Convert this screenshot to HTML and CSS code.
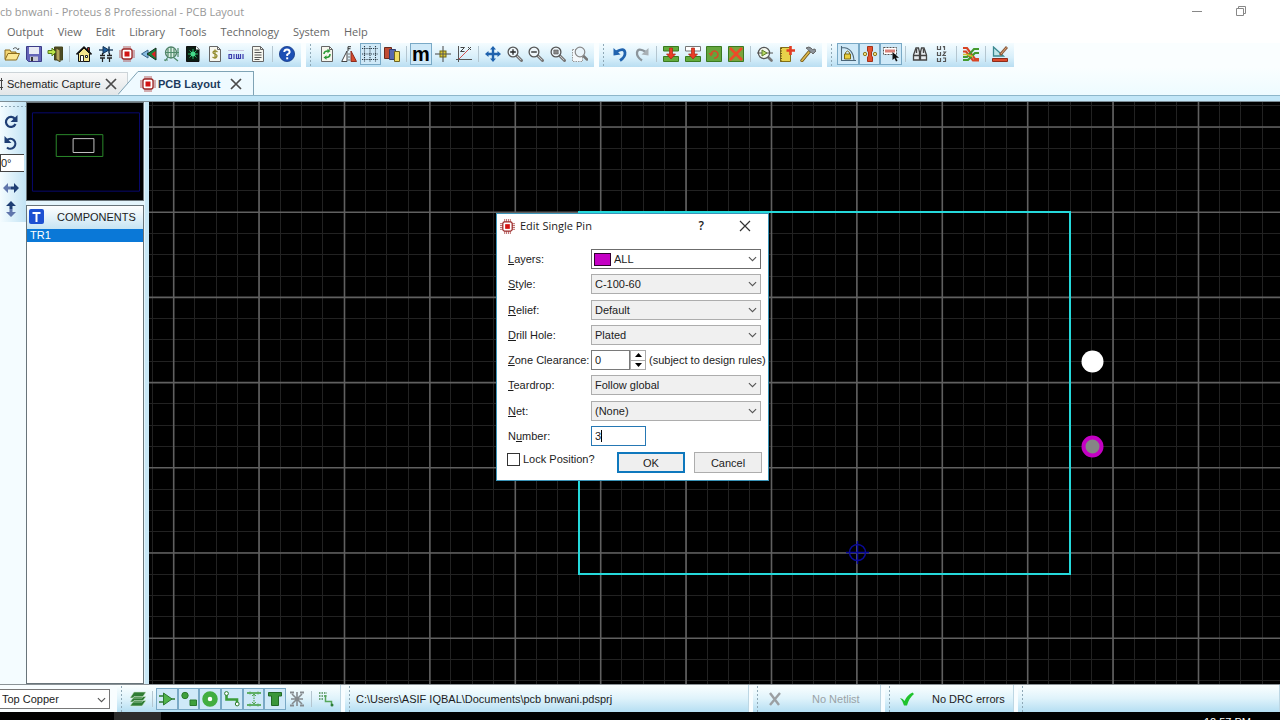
FILE: index.html
```html
<!DOCTYPE html>
<html lang="en">
<head>
<meta charset="utf-8">
<title>pcb bnwani - Proteus 8 Professional - PCB Layout</title>
<link rel="stylesheet" href="styles.css">
</head>
<body>
<svg class="defs" aria-hidden="true">
  <symbol id="chip" viewBox="0 0 16 16"><path d="M5 0v16M7 0v16M9 0v16M11 0v16M0 5h16M0 7h16M0 9h16M0 11h16" stroke="#b05050" stroke-width=".9"/><rect x="3" y="3" width="10" height="10" rx="2" fill="#fff" stroke="#9a2828" stroke-width="1.300"/><rect x="5.500" y="5.500" width="5" height="5" fill="#d21414"/></symbol>
  <symbol id="chev" viewBox="0 0 10 6"><path d="M1 .8l4 4 4-4" fill="none" stroke="#555" stroke-width="1.200"/></symbol>
  <symbol id="close" viewBox="0 0 12 12"><path d="M1 1l10 10M11 1L1 11" fill="none" stroke="#4a4a4a" stroke-width="1.700"/></symbol>
  <symbol id="lens" viewBox="0 0 16 16"><path d="M9.500 9.500l5 5" stroke="#777" stroke-width="3" stroke-linecap="round"/><path d="M10 10l4 4" stroke="#c4c4c4"/><circle cx="6" cy="6" r="4.900" fill="#eef6fa" stroke="#555" stroke-width="1.300"/></symbol>
  <symbol id="sheet" viewBox="0 0 16 16"><path d="M2.500.5h8l3 3v12h-11z" fill="#f6f6ee" stroke="#666"/><path d="M10.500.5v3h3" fill="none" stroke="#666"/></symbol>
</svg>

<header class="titlebar">
  <h1 class="title">cb bnwani - Proteus 8 Professional - PCB Layout</h1>
  <div class="winbtns">
    <button aria-label="Minimize"><svg width="12" height="12"><path d="M1 6.500h10" stroke="#888"/></svg></button>
    <button aria-label="Restore"><svg width="12" height="12"><path d="M1.500 3.500h7v7h-7zM3.500 3.500v-2h7v7h-2" fill="none" stroke="#888"/></svg></button>
  </div>
</header>

<nav class="menu">
  <button>Output</button><button>View</button><button>Edit</button><button>Library</button><button>Tools</button><button>Technology</button><button>System</button><button>Help</button>
</nav>

<div class="toolbars">
  <div class="bar bar-first">
    <div class="grp g3">
      <button aria-label="Open"><svg viewBox="0 0 16 16"><path d="M1 13V4h5l1 2h5v2" fill="#f4d774" stroke="#8a6a1c"/><path d="M1 14l3-6.500h11.500L12.500 14z" fill="#fbe793" stroke="#8a6a1c"/><path d="M9 3q3-3 5 1l1-2" fill="none" stroke="#555"/></svg></button>
      <button aria-label="Save"><svg viewBox="0 0 16 16"><path d="M.5.5h15v15h-13l-2-2z" fill="#6464b8" stroke="#3c3c88"/><path d="M3 1h10v7H3z" fill="#e8eaf4"/><path d="M4 10.500h8V15H4z" fill="#c8c8d8"/><path d="M5 11h2v4H5z" fill="#333"/></svg></button>
      <button aria-label="Close project"><svg viewBox="0 0 16 16"><path d="M7.500 1h8v13h-8z" fill="#4c4c22" stroke="#44441c"/><path d="M9 2l4 2v12l-4-3z" fill="#b3a45a" stroke="#4c4420"/><path d="M1 4.500h4V2l4 4-4 4V7.500H1z" fill="#bde34a" stroke="#55801c"/></svg></button>
    </div>
    <i class="sep"></i>
    <div class="grp g9">
      <button aria-label="Home"><svg viewBox="0 0 16 16"><path d="M11.500 1.500h2v5h-2z" fill="#aa2222" stroke="#222"/><path d="M2.500 7.500v8h11v-8L8 2z" fill="#f4e48c" stroke="#111"/><path d="M.5 8.500L8 1.200l7.500 7.300" fill="none" stroke="#111" stroke-width="1.600"/><path d="M4.500 9.500h3v6h-3z" fill="#fff" stroke="#222"/><path d="M9.500 9.500h2v2h-2z" fill="#fff" stroke="#222"/></svg></button>
      <button aria-label="Schematic"><svg viewBox="0 0 16 16"><path d="M1 4h14" stroke="#163454" stroke-width="1.300"/><path d="M5 .5v7L11 4z" fill="#1c5c9c" stroke="#163454"/><path d="M11 .5v7" stroke="#163454" stroke-width="1.500"/><path d="M2 9.500h5M2 12h5M9 9.500h5M9 12h5" stroke="#222" stroke-width="1.500"/><path d="M4.500 7v2.500M4.500 12v4M11.500 7v2.500M11.500 12v4" stroke="#222" stroke-width="1.200"/></svg></button>
      <button aria-label="PCB"><svg><use href="#chip"/></svg></button>
      <button aria-label="3D view"><svg viewBox="0 0 16 16"><path d="M7 4L.5 8 7 12z" fill="#88bce0" stroke="#38668a"/><path d="M15 2L6 8l9 6z" fill="#15853c" stroke="#142c1c"/><path d="M10.500 8l4-3v7z" fill="#d22"/></svg></button>
      <button aria-label="Gerber viewer"><svg viewBox="0 0 16 16"><circle cx="8" cy="6.500" r="5.500" fill="#dceee4" stroke="#4f7f66" stroke-width="1.300"/><path d="M8 1v11M2 6.500h14M5 2.500v8M11 2.500v8M15 2v9M1 14h4M10 11l5 4M5 11l-3 4" fill="none" stroke="#4f8a6a" stroke-width="1.200"/></svg></button>
      <button aria-label="Design explorer"><svg viewBox="0 0 16 16"><path d="M1.500.5h9.500l3 3v12H1.500z" fill="#0b1d12" stroke="#111"/><path d="M11 .5v3h3z" fill="#fff"/><path d="M8 3v10M3 8h10M4.500 4.500l7 7M11.500 4.500l-7 7" stroke="#22b860"/><circle cx="8" cy="8" r="2.500" fill="#45db8a"/></svg></button>
      <button aria-label="Bill of materials"><svg viewBox="0 0 16 16"><use href="#sheet"/><path d="M10.500 6Q8 4 6.500 5.500T8 8t1.500 3-4 0M8 3.500v9" fill="none" stroke="#938c2c" stroke-width="1.300"/></svg></button>
      <button aria-label="Source code"><svg viewBox="0 0 16 16"><path d="M0 4.500h16" stroke="#c8c4dc"/><path d="M1 8.500h2.500v4H1zM6 8v5M8.500 8v4.500h2V8M10.500 12.500h2V8M15 8v5" fill="none" stroke="#3c3cae" stroke-width="1.200"/></svg></button>
      <button aria-label="Project notes"><svg viewBox="0 0 16 16"><use href="#sheet"/><path d="M4.500 4h5M4.500 6.500h7M4.500 9h7M4.500 11.500h7M4.500 13.500h5" stroke="#555"/></svg></button>
    </div>
    <i class="sep"></i>
    <div class="grp g1"><button aria-label="Help"><svg viewBox="0 0 16 16"><circle cx="8" cy="8" r="7.600" fill="#1c4fb4" stroke="#153a86" stroke-width=".8"/><path d="M5.200 6Q5.500 3.500 8 3.500T10.700 6Q10.500 7.500 8.200 8.500V10" fill="none" stroke="#fff" stroke-width="1.900"/><path d="M7.200 11.300h2v2h-2z" fill="#fff"/></svg></button></div>
  </div>

  <div class="bar">
    <i class="handle"></i>
    <div class="grp g4">
      <button aria-label="Redraw"><svg viewBox="0 0 16 16"><use href="#sheet"/><path d="M5 8q0-3 4-3M11 8q0 3.500-4 3.500" fill="none" stroke="#2c9a36" stroke-width="1.600"/><path d="M8.500 2.800l3 2.200-3 2.200zM7.500 9.300l-3 2.200 3 2.200z" fill="#2c9a36"/></svg></button>
      <button aria-label="Flip view"><svg viewBox="0 0 16 16"><path d="M6 5v10.500H.7z" fill="#fff" stroke="#444"/><path d="M10 5v10.500h5.500z" fill="#d84a2c" stroke="#8c2c1c"/><path d="M8 7v9" stroke="#777" stroke-dasharray="2 1"/><path d="M7 5V.7h3M7 2.700h2.500" fill="none" stroke="#333"/></svg></button>
      <button class="on" aria-label="Grid"><svg viewBox="0 0 16 16"><path d="M0 2.500h16M0 8h16M0 13.500h16M2.500 0v16M8 0v16M13.500 0v16" stroke="#2c3c48" stroke-width="1.100" stroke-dasharray="1.200 1"/></svg></button>
      <button aria-label="Layers"><svg viewBox="0 0 16 16"><path d="M.5 1.500h7v11h-7z" fill="#c04c34" stroke="#6b2a1c"/><path d="M5.500 3.500h6v10h-6z" fill="#5868b0" stroke="#333f70"/><path d="M10.500 5.500h5v10h-5z" fill="#f0dc62" stroke="#6e6320"/></svg></button>
    </div>
    <i class="sep"></i>
    <div class="grp g3">
      <button class="on metric" aria-label="Metric">m</button>
      <button aria-label="Origin"><svg viewBox="0 0 16 16"><path d="M8 0v16M0 8h16" stroke="#444"/><rect x="5" y="5" width="6" height="6" fill="#dcc932" stroke="#6f6614"/><path d="M8 5v6M5 8h6" stroke="#555"/></svg></button>
      <button aria-label="Polar coordinates"><svg viewBox="0 0 16 16"><path d="M2.500 0v16M0 13.500h16" stroke="#555"/><path d="M3 13L14 2" stroke="#d25050"/><path d="M4.500 1.500h4l-4 4h4M12 1l3 3M15 1l-3 3" fill="none" stroke="#444"/></svg></button>
    </div>
    <i class="sep"></i>
    <div class="grp g5">
      <button aria-label="Pan"><svg viewBox="0 0 16 16"><path d="M8 0l3 3.500H9.200v3.300h3.300V5L16 8l-3.500 3V9.200H9.200v3.300H11L8 16l-3-3.500h1.800V9.200H3.500V11L0 8l3.500-3v1.800h3.300V3.500H5z" fill="#1f62ae"/></svg></button>
      <button aria-label="Zoom in"><svg viewBox="0 0 16 16"><use href="#lens"/><path d="M6 3.200v5.600M3.200 6h5.600" stroke="#222" stroke-width="1.300"/></svg></button>
      <button aria-label="Zoom out"><svg viewBox="0 0 16 16"><use href="#lens"/><path d="M3.200 6h5.600" stroke="#222" stroke-width="1.300"/></svg></button>
      <button aria-label="Zoom all"><svg viewBox="0 0 16 16"><use href="#lens"/><path d="M3.800 4h4.400v4H3.800z" fill="#888" stroke="#555" stroke-width=".6"/></svg></button>
      <button aria-label="Zoom area"><svg viewBox="0 0 16 16"><path d="M.5 3.500h10v12H.5z" fill="#f4f8fb" stroke="#999" stroke-dasharray="1.500 1"/><path d="M11.500 10l3.500 3.500" stroke="#777" stroke-width="2.500" stroke-linecap="round"/><circle cx="8" cy="6" r="4.800" fill="#eaf4fa" stroke="#888" stroke-width="1.200"/></svg></button>
    </div>
  </div>

  <div class="bar">
    <i class="handle"></i>
    <div class="grp g2">
      <button aria-label="Undo"><svg viewBox="0 0 16 16"><path d="M4 6Q12 1 13 6.500 13.500 11 8 14.500" fill="none" stroke="#2163ae" stroke-width="2.800"/><path d="M1.500 2v7.500l7-1z" fill="#2163ae"/></svg></button>
      <button aria-label="Redo"><svg viewBox="0 0 16 16"><path d="M12 6Q4 1 3 6.500 2.500 11 8 14.500" fill="none" stroke="#8c959b" stroke-width="2.300"/><path d="M14.500 2v7.500l-7-1z" fill="#a8b0b5"/></svg></button>
    </div>
    <i class="sep"></i>
    <div class="grp g4">
      <button aria-label="Block copy"><svg viewBox="0 0 16 16"><path d="M.5.500h15v4.500H.5zM.5 10.500h15v5H.5z" fill="#63ac3c" stroke="#3a7a20"/><path d="M6.500 2h3v6h3L8 13 3.500 8h3z" fill="#ea3c26" stroke="#a82516" stroke-width=".7"/></svg></button>
      <button aria-label="Block move"><svg viewBox="0 0 16 16"><path d="M.5.500h15v4.500H.5z" fill="#fff" stroke="#777"/><path d="M.5 10.500h15v5H.5z" fill="#63ac3c" stroke="#3a7a20"/><path d="M6.500 2h3v6h3L8 13 3.500 8h3z" fill="#ea3c26" stroke="#a82516" stroke-width=".7"/></svg></button>
      <button aria-label="Block rotate"><svg viewBox="0 0 16 16"><path d="M.5.500h15v15H.5z" fill="#63a53c" stroke="#3a7a20"/><path d="M5 8.500a3.500 3.500 0 1 1 3 3.500" fill="none" stroke="#d2502a" stroke-width="1.600"/><path d="M2.500 7h5L5 10.500z" fill="#d2502a"/></svg></button>
      <button aria-label="Block delete"><svg viewBox="0 0 16 16"><path d="M.5.500h15v15H.5z" fill="#7aa33c" stroke="#3a7a20"/><path d="M2 2l12 12M14 2L2 14" stroke="#ee4a28" stroke-width="2.600"/></svg></button>
    </div>
    <i class="sep"></i>
    <div class="grp g3">
      <button aria-label="Pick parts"><svg viewBox="0 0 16 16"><path d="M11 11l3.500 3.500" stroke="#777" stroke-width="2.600" stroke-linecap="round"/><circle cx="7" cy="7" r="5.600" fill="#f4f8ee" stroke="#555" stroke-width="1.200"/><path d="M0 7h5M9.500 7H16" stroke="#555"/><path d="M5 4v6l5-3z" fill="#b9da62" stroke="#5c7a2c"/></svg></button>
      <button aria-label="Make package"><svg viewBox="0 0 16 16"><path d="M1.500 1.500h10v14h-10z" fill="#e8d24a" stroke="#826f16"/><path d="M2 2v14" stroke="#6d5c1c" stroke-dasharray="1 1.500" stroke-width="2"/><path d="M11.500 0v9M7.500 4.500H16" stroke="#e23c22" stroke-width="2.600"/></svg></button>
      <button aria-label="Decompose"><svg viewBox="0 0 16 16"><path d="M9 6L2 14.500" stroke="#6e5418" stroke-width="3.400" stroke-linecap="round"/><path d="M9 6L2 14.500" stroke="#dcb84c" stroke-width="1.800" stroke-linecap="round"/><path d="M6 2q3-2 5 0l1.500 1.500L15 3l1 2-3 3-1.500-1.500L10 6 8.500 4z" fill="#8c9298" stroke="#555" stroke-width=".8"/></svg></button>
    </div>
  </div>

  <div class="bar">
    <i class="handle"></i>
    <div class="grp g3">
      <button class="on" aria-label="Trace angle lock"><svg viewBox="0 0 16 16"><path d="M1.500 0v14.500H16M2 1.500q11 0 12 13" fill="none" stroke="#4c6678" stroke-width="1.100"/><path d="M4.500 8h6v5h-6z" fill="#e8ce3c" stroke="#7d6a14"/><path d="M5.500 8V6.500q2-3 4 0V8" fill="none" stroke="#7d6a14"/></svg></button>
      <button class="on" aria-label="Auto track necking"><svg viewBox="0 0 16 16"><path d="M5.500.5h5V5l-1 1v4l1 1v4.500h-5V11l1-1V6l-1-1z" fill="#e2502e" stroke="#a53218"/><circle cx="3" cy="8" r="1.700" fill="#f0dc7c" stroke="#8c7822"/><circle cx="13" cy="8" r="1.700" fill="#f0dc7c" stroke="#8c7822"/></svg></button>
      <button class="on" aria-label="Selection filter"><svg viewBox="0 0 16 16"><path d="M.5 1.500h13v7H.5z" fill="#fff" stroke="#555" stroke-dasharray="2 1"/><path d="M2 3.500h10v3H2z" fill="#d98078"/><path d="M9.500 6v8l2-1.700 1.500 3.200 1.500-.7-1.500-3H16z" fill="#111"/></svg></button>
    </div>
    <i class="sep"></i>
    <div class="grp g2">
      <button aria-label="Search"><svg viewBox="0 0 16 16"><path d="M4 2h2.500l1 4v8h-6V9zM9.500 2H12l2.500 7v5h-6V6z" fill="#e5eaee" stroke="#444" stroke-width="1.300"/><path d="M2 9.500h5M9 9.500h5M7 6.500h2M4.500 3v4M11.500 3v4" stroke="#444" stroke-width="1.400"/></svg></button>
      <button aria-label="Auto name"><svg viewBox="0 0 16 16"><path d="M3.500 0v3.500h3V0M3.500 6v3.500h3V6M3.500 12v3.500h3V12M9 1l1.500-1v4M9 6h2.500l-2.500 3.500h3M9 12h2.500v3.500H9" fill="none" stroke="#555" stroke-width="1.200"/></svg></button>
    </div>
    <i class="sep"></i>
    <div class="grp g1"><button aria-label="Auto-router"><svg viewBox="0 0 16 16"><path d="M0 2h4l8 11h4M0 5.500h3l7 9h6" fill="none" stroke="#d84424" stroke-width="2.200"/><path d="M0 11h4l7-8h5M0 14h5l7-7h4" fill="none" stroke="#439a2e" stroke-width="2.200"/><path d="M0 8.500h4l6 2" fill="none" stroke="#d6bd2c" stroke-width="1.500"/></svg></button></div>
    <i class="sep"></i>
    <div class="grp g1"><button aria-label="Design rules"><svg viewBox="0 0 16 16"><path d="M1.500 1v9h10z" fill="#bfe6e8" stroke="#3c8890" stroke-width="1.300"/><path d="M.5 12.500h15v3H.5z" fill="#dc4a2c" stroke="#8c2c1a"/><path d="M15 1L8 9" stroke="#8c5a3c" stroke-width="2.800"/><path d="M14.500 1.500L9 8" stroke="#dda878" stroke-width="1"/></svg></button></div>
  </div>
</div>

<div class="tabs">
  <div class="tab tab-idle"><svg class="stub" width="4" height="14"><path d="M0 3.500h3M0 10.500h3M1.500 1v12" stroke="#444"/></svg><span>Schematic Capture</span><button aria-label="Close Schematic Capture"><svg width="12" height="12"><use href="#close"/></svg></button></div>
  <div class="tab tab-active">
    <svg class="slant" width="22" height="24" viewBox="0 0 22 24"><path d="M0 24L20 .5h2V24z" fill="#effaff"/><path d="M0 23.500L20 .5h2" fill="none" stroke="#7fa3b5"/></svg>
    <div class="tabface"><svg width="16" height="16"><use href="#chip"/></svg><span>PCB Layout</span><button aria-label="Close PCB Layout"><svg width="12" height="12"><use href="#close"/></svg></button></div>
  </div>
</div>
<div class="band"></div>

<main class="work">
  <aside class="rotate">
    <div class="rotbar">
      <button aria-label="Rotate clockwise"><svg width="16" height="16"><path d="M12.500 10A5 5 0 1 1 12 5" fill="none" stroke="#1f3e74" stroke-width="2.200"/><path d="M14.500 1v7h-7z" fill="#1f3e74"/></svg></button>
      <button aria-label="Rotate anti-clockwise"><svg width="16" height="16"><path d="M4 12.500A5 5 0 1 0 4 5" fill="none" stroke="#1f3e74" stroke-width="2.200"/><path d="M1.500 1v7h7z" fill="#1f3e74"/></svg></button>
      <input class="angle" aria-label="Angle" value="0°">
      <button aria-label="Mirror horizontally"><svg width="16" height="16"><path d="M0 8l5-5v3.500h3v3H5V13z" fill="#6076ac"/><path d="M16 8l-5-5v3.500H8v3h3V13z" fill="#1f3e74"/></svg></button>
      <button aria-label="Mirror vertically"><svg width="16" height="16"><path d="M8 0l5 5H9.500v3h-3V5H3z" fill="#1f3e74"/><path d="M8 16l5-5H9.500V8h-3v3H3z" fill="#6076ac"/></svg></button>
    </div>
  </aside>
  <section class="side">
    <svg class="overview" viewBox="0 0 117 97"><path d="M5.500 9.500h108v79H5.500z" fill="none" stroke="#08086e"/><path d="M29.500 31.500h47v22h-47z" fill="none" stroke="#2b8a2b"/><path d="M46.500 35.500h21v14h-21z" fill="none" stroke="#c4c4c4"/></svg>
    <div class="panel">
      <h2><svg width="15" height="15"><rect width="15" height="15" rx="2" fill="#1c50d2"/><path d="M3.500 4h8M7.500 4v9" stroke="#fff" stroke-width="2"/></svg><span>COMPONENTS</span></h2>
      <ul><li>TR1</li></ul>
    </div>
  </section>
  <section class="canvas">
    <svg class="board" aria-label="Board">
      <g shape-rendering="crispEdges">
        <path d="M-61.500 0H3000" stroke="#222" stroke-width="4000" stroke-dasharray="1 20.350"/>
        <path d="M0-60.700V3000" stroke="#222" stroke-width="6000" stroke-dasharray="1 20.300"/>
      </g>
      <path d="M-61.500 0H3000" stroke="#606060" stroke-width="4000" stroke-dasharray="1.600 83.800"/>
      <path d="M0-61V3000" stroke="#606060" stroke-width="6000" stroke-dasharray="1.600 83.600"/>
      <rect x="430" y="110" width="491" height="362" fill="none" stroke="#25d9db" stroke-width="2"/>
      <circle cx="943.500" cy="259.500" r="11" fill="#fff"/>
      <circle cx="943.500" cy="344.500" r="9" fill="#858585" stroke="#c400c4" stroke-width="4"/>
      <g fill="none" stroke="#0a0a9a" stroke-width="1.500"><circle cx="708.500" cy="450.500" r="8"/><path d="M697 450.500h23M708.500 439v23"/></g>
    </svg>
    <form class="dialog">
      <div class="dhead"><svg width="15" height="15"><use href="#chip"/></svg><span class="dtitle">Edit Single Pin</span><button type="button" class="q" aria-label="Help">?</button><button type="button" aria-label="Close"><svg width="12" height="12"><path d="M1 1l10 10M11 1L1 11" stroke="#333" stroke-width="1.200"/></svg></button></div>
      <div class="fields">
        <div class="row"><label for="layers"><u>L</u>ayers:</label><span class="combo swatched"><select id="layers"><option>ALL</option></select><i class="swatch"></i><svg><use href="#chev"/></svg></span></div>
        <div class="row"><label for="style"><u>S</u>tyle:</label><span class="combo"><select id="style"><option>C-100-60</option></select><svg><use href="#chev"/></svg></span></div>
        <div class="row"><label for="relief"><u>R</u>elief:</label><span class="combo"><select id="relief"><option>Default</option></select><svg><use href="#chev"/></svg></span></div>
        <div class="row"><label for="drill"><u>D</u>rill Hole:</label><span class="combo"><select id="drill"><option>Plated</option></select><svg><use href="#chev"/></svg></span></div>
        <div class="row"><label for="zone"><u>Z</u>one Clearance:</label><input id="zone" class="num" value="0"><span class="spin"><button type="button" aria-label="Increase"><svg width="7" height="4"><path d="M0 4l3.500-4L7 4z"/></svg></button><button type="button" aria-label="Decrease"><svg width="7" height="4"><path d="M0 0l3.500 4L7 0z"/></svg></button></span><span class="hint">(subject to design rules)</span></div>
        <div class="row"><label for="tear"><u>T</u>eardrop:</label><span class="combo"><select id="tear"><option>Follow global</option></select><svg><use href="#chev"/></svg></span></div>
        <div class="row"><label for="net"><u>N</u>et:</label><span class="combo"><select id="net"><option>(None)</option></select><svg><use href="#chev"/></svg></span></div>
        <div class="row"><label for="number">N<u>u</u>mber:</label><span class="numwrap"><input id="number" value="3"><i class="caret"></i></span></div>
      </div>
      <div class="dfoot"><label class="lock"><input type="checkbox"><span>Lock Position?</span></label><button type="button" class="btn ok">OK</button><button type="button" class="btn">Cancel</button></div>
    </form>
  </section>
</main>

<footer class="status">
  <span class="combo layer"><select aria-label="Layer"><option>Top Copper</option></select><svg><use href="#chev"/></svg></span>
  <div class="sbar sfilter">
    <i class="handle"></i>
    <div class="grp g1"><button aria-label="Layer stack"><svg viewBox="0 0 16 16"><path d="M4 9.500h12L12 15H0zM4 5.500h12L12 11H0zM4 1h12l-4 6H0z" fill="#2f7d34" stroke="#d4ecd4" stroke-width=".6"/></svg></button></div>
    <i class="sep"></i>
    <div class="grp g6">
      <button class="on" aria-label="Components"><svg viewBox="0 0 16 16"><path d="M0 5h5M0 11h5M12 8h4" stroke="#2b7a2e" stroke-width="1.300"/><path d="M4.500 2v12L13 8z" fill="#51b34a" stroke="#2b7a2e"/></svg></button>
      <button class="on" aria-label="Pins"><svg viewBox="0 0 16 16"><circle cx="4" cy="4.500" r="3.200" fill="#3fa03c" stroke="#2b7a2e"/><path d="M9 9h6.500v5.500H9z" fill="#3fa03c" stroke="#2b7a2e"/></svg></button>
      <button class="on" aria-label="Vias"><svg viewBox="0 0 16 16"><circle cx="8" cy="8" r="5" fill="#fff" stroke="#42ae40" stroke-width="5.500"/></svg></button>
      <button class="on" aria-label="Tracks"><svg viewBox="0 0 16 16"><path d="M2.500 3v5.500H13V12" fill="none" stroke="#3c9d38" stroke-width="2.600"/><circle cx="2.500" cy="2.500" r="1.900" fill="#fff" stroke="#2b7a2e"/><circle cx="13.200" cy="13" r="1.900" fill="#fff" stroke="#2b7a2e"/></svg></button>
      <button class="on" aria-label="Dimensions"><svg viewBox="0 0 16 16"><path d="M1 2h14M1 14h14" stroke="#3c9d38" stroke-width="1.500"/><path d="M8 4v8" stroke="#3c9d38" stroke-dasharray="1.500 1"/><path d="M4 .5v3M12 .5v3M4 12.500v3M12 12.500v3M6 5l2-2 2 2M6 11l2 2 2-2" fill="none" stroke="#58a858"/></svg></button>
      <button class="on" aria-label="Graphics"><svg viewBox="0 0 16 16"><path d="M1.500 1.500h13V5h-3v9.500h-7V5h-3z" fill="#3a963a" stroke="#226a26"/></svg></button>
    </div>
    <div class="grp g1"><button aria-label="Ratsnest"><svg viewBox="0 0 16 16"><path d="M8 1v14M3 3l10 10M13 3L3 13M2 8h12" stroke="#858b8f" stroke-width="1.600"/><path d="M1 1.500h4M11 1.500h4M1 14.500h4M11 14.500h4" stroke="#858b8f" stroke-width="2"/></svg></button></div>
    <i class="sep"></i>
    <div class="grp g1"><button aria-label="Snap to track"><svg viewBox="0 0 16 16"><path d="M1 2h8M1 5h8M1 8h5" stroke="#4a8c54" stroke-width="1.300" stroke-dasharray="1.500 1"/><path d="M7.500 4v6.500h6V13" fill="none" stroke="#55a65a" stroke-width="1.500"/><circle cx="14" cy="14" r="1.500" fill="#2c7c36"/></svg></button></div>
  </div>
  <div class="sbar spath"><i class="handle"></i><span>C:\Users\ASIF IQBAL\Documents\pcb bnwani.pdsprj</span></div>
  <div class="sbar snet"><i class="handle"></i><svg width="14" height="14"><path d="M2 1l9 12M12 1L2 13" stroke="#9b9fa2" stroke-width="2.400"/></svg><span>No Netlist</span></div>
  <div class="sbar sdrc"><i class="handle"></i><svg width="14" height="14"><path d="M0 6q3 .5 4.500 3Q7 3 12.500.5L14 2Q9 6 7 13.500H4Q3 9 0 6z" fill="#1fc32c"/></svg><span>No DRC errors</span></div>
  <div class="sbar srest"><i class="handle"></i></div>
</footer>
<div class="taskbar"><i class="task"></i><time>12:57 PM</time></div>
</body>
</html>
```
FILE: styles.css
```css
* { box-sizing: border-box; }
body {
  margin: 0; height: 100vh; overflow: hidden;
  display: flex; flex-direction: column;
  font: 11px/14px "Liberation Sans", Arial, sans-serif;
  color: #1c1c1c; background: #fff;
}
button, input, select { font: inherit; color: inherit; margin: 0; padding: 0; border: 0; background: none; border-radius: 0; }
i { display: block; }
svg { display: block; flex: none; }
.defs { position: absolute; width: 0; height: 0; }

.titlebar { display: flex; justify-content: space-between; height: 22px; flex: none; }
.title { margin: 0; font: 11px/22px "Open Sans", "Noto Sans", sans-serif; color: #999; white-space: nowrap; padding-top: 1px; }
.winbtns { display: flex; gap: 32px; padding-right: 33px; align-items: center; }

.menu { display: flex; align-items: flex-start; gap: 14px; height: 21px; flex: none; padding-left: 7px; font: 11px/20px "Open Sans", "Noto Sans", sans-serif; color: #666; }

.toolbars { display: flex; gap: 5px; height: 24px; flex: none; background: #fafeff; }
.bar { display: flex; padding-right: 3px; background: linear-gradient(#f4fcff, #d8effa 60%, #b9def2); }
.bar-first { padding-left: 1px; }
.grp { display: flex; height: 22px; }
.grp button { flex: 1; min-width: 0; display: flex; align-items: center; justify-content: center; border: 1px solid transparent; }
.grp svg { width: 16px; height: 16px; }
.g1 { width: 22px; } .g2 { width: 44px; } .g3 { width: 65px; } .g4 { width: 87px; }
.g5 { width: 109px; } .g6 { width: 130px; } .g9 { width: 196px; }
.grp .on { border-color: #79a9c6; background: #cfe9f8; }
.grp .metric { font: bold 20px/18px "Liberation Sans", Arial, sans-serif; color: #000; }
.sep { width: 7px; flex: none; height: 16px; margin-top: 3px; background: linear-gradient(#b4c6d0, #b4c6d0) 3px 0 / 1px 100% no-repeat; }
.handle { width: 10px; flex: none; background: radial-gradient(circle, #8ea8b6 1px, transparent 1px) 3px 0 / 3px 4px repeat-y; }

.tabs { display: flex; align-items: flex-end; height: 28px; flex: none; background: linear-gradient(#fafeff, #eefbff); }
.tab { display: flex; align-items: center; }
.tab-idle { height: 23px; width: 128px; background: linear-gradient(#f8f8f8, #e2e6e8); border-top: 1px solid #ccd4d8; border-right: 1px solid #ccd4d8; }
.tab-idle span { margin: 0 4px 0 3px; white-space: nowrap; }
.tab-active { margin-left: -10px; height: 24px; position: relative; }
.tabface { display: flex; align-items: center; height: 24px; padding-right: 11px; border-top: 1px solid #7fa3b5; border-right: 1px solid #7fa3b5; background: #effaff; }
.tabface span { font-weight: bold; color: #1c3a5c; margin: 0 10px 0 2px; white-space: nowrap; }
.band { height: 7px; flex: none; border-top: 1px solid #8db6ca; border-bottom: 1px solid #7c8c94; background: #c2e6f7; }

.work { flex: 1; min-height: 0; display: flex; background: #c9e8f6; }
.rotate { width: 26px; flex: none; background: #f4fcff; }
.rotbar { display: flex; flex-direction: column; gap: 5px; padding: 12px 0 5px 3px; background: radial-gradient(circle, #8ea8b6 1px, transparent 1px) 0 3px / 4px 3px repeat-x, linear-gradient(90deg, #f4fcff, #c2e3f4); }
.angle { width: 24px; height: 18px; margin: -2px 0 3px -3px; border: 1px solid #444; border-right: 0; background: #fff; }
.side { width: 119px; flex: none; display: flex; flex-direction: column; gap: 4px; background: #e4f5fc; }
.overview { width: 118px; height: 99px; background: #000; border: 1px solid #6b757a; }
.panel { flex: 1; width: 118px; background: #fff; border: 1px solid #68747a; }
.panel h2 { margin: 0; height: 23px; display: flex; align-items: center; gap: 13px; padding: 0 0 2px 2px; font: inherit; background: linear-gradient(#fff, #c6e4f3); }
.panel ul { list-style: none; margin: 0; padding: 0; }
.panel li { background: #0a78d7; color: #fff; padding: 0 3px; height: 13px; line-height: 13px; }
.canvas { flex: 1; min-width: 0; margin-left: 4px; position: relative; overflow: hidden; background: #000; }
.board { width: 100%; height: 100%; }

.dialog { position: absolute; left: 347px; top: 111px; width: 273px; height: 268px; display: flex; flex-direction: column; background: #fff; border: 1px solid #3a94b8; }
.dhead { display: flex; align-items: center; height: 24px; padding: 0 17px 0 3px; gap: 5px; }
.dtitle { flex: 1; font: 11px/16px "Open Sans", "Noto Sans", sans-serif; }
.dhead .q { font: 600 12px/16px "Open Sans", "Noto Sans", sans-serif; margin-right: 30px; }
.fields { flex: 1; display: flex; flex-direction: column; justify-content: space-between; padding: 11px 7px 6px 11px; }
.row { display: flex; align-items: center; white-space: nowrap; }
.row label { width: 83px; flex: none; }
.combo { position: relative; display: block; flex: 1; }
.combo select { appearance: none; width: 100%; height: 20px; padding: 0 3px; background: #f0f0f0; border: 1px solid #adadad; display: block; }
.combo svg { position: absolute; right: 4px; top: 7px; width: 9px; height: 6px; pointer-events: none; }
.swatched select { padding-left: 22px; background: #fff; border-color: #6c6c6c; }
.swatch { position: absolute; left: 3px; top: 4px; width: 17px; height: 13px; background: #c400c4; border: 1px solid #300030; }
.num { width: 39px; flex: none; height: 20px; padding: 0 3px; border: 1px solid #7a7a7a; background: #fff; }
.spin { width: 16px; flex: none; height: 20px; display: flex; flex-direction: column; border: 1px solid #aaa; }
.spin button { flex: 1; display: flex; align-items: center; justify-content: center; }
.spin button + button { border-top: 1px solid #aaa; }
.hint { margin-left: 3px; }
.numwrap { position: relative; }
.numwrap input { display: block; width: 55px; height: 20px; padding: 0 3px; border: 1px solid #2678b4; outline: 0; }
.caret { position: absolute; left: 10px; top: 4px; width: 1px; height: 12px; background: #000; }
.dfoot { display: flex; align-items: center; height: 28px; padding: 0 6px 7px 10px; }
.lock { flex: 1; display: flex; align-items: center; gap: 3px; margin-top: -7px; white-space: nowrap; }
.lock input { appearance: none; width: 13px; height: 13px; border: 1px solid #333; background: #fff; }
.btn { width: 68px; height: 21px; background: #efefef; border: 1px solid #adadad; }
.btn.ok { border: 2px solid #0f78bd; margin-right: 9px; }

.status { display: flex; height: 28px; flex: none; border-top: 1px solid #8a9296; background: #f8fdff; }
.layer { flex: none; width: 110px; padding-top: 4px; }
.layer select { height: 20px; padding-left: 2px; background: #fff; border-color: #777; border-left: 0; }
.layer svg { top: 12px; }
.sbar { display: flex; align-items: center; white-space: nowrap; margin-right: 4px; border-right: 1px solid #bdd7e4; background: linear-gradient(#fbffff, #dff3fb 50%, #b5def2); }
.sbar .handle { align-self: stretch; }
.sfilter { width: 224px; margin-left: 7px; }
.sfilter .sep { margin-top: 0; }
.spath { width: 404px; }
.spath span { padding-left: 1px; }
.snet { width: 128px; color: #9aa2a6; }
.snet svg, .sdrc svg { margin-left: 5px; }
.snet span { margin-left: 30px; }
.sdrc { width: 129px; }
.sdrc span { margin-left: 18px; }
.srest { flex: 1; margin: 0; }
.taskbar { height: 8px; flex: none; overflow: hidden; display: flex; justify-content: space-between; padding: 0 29px 0 114px; background: #000; color: #fff; }
.task { width: 47px; background: #2c2c2c; }
.taskbar time { font-size: 11px; line-height: 14px; padding-top: 3px; }
```
